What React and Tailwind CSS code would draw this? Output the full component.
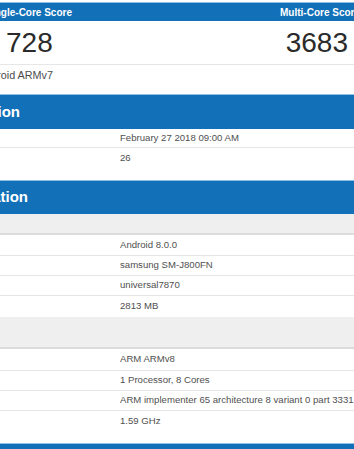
import React from "react"

const BLUE = "bg-[#1170b8]"

function Bar({ title, endX, height }) {
  // section header; the title runs off the left edge of the window
  return (
    <div className={`${BLUE} border-t border-[#8cc0e4] flex items-center ${height}`}>
      <div className="flex justify-end whitespace-nowrap text-white font-bold text-[15px]" style={{ width: endX }}>
        {title}
      </div>
    </div>
  )
}

function Row({ value, h = "h-[19px]", last = false }) {
  return (
    <div className={`${h} flex items-center pl-[120px] text-[9.6px] text-[#505050] whitespace-nowrap ${last ? "" : "border-b border-[#e6e6e6]"}`}>
      {value}
    </div>
  )
}

export default function App() {
  return (
    <div className="w-[354px] h-[449px] overflow-hidden bg-white font-['Liberation_Sans',Arial,sans-serif]">
      {/* scores */}
      <div className="pt-[2px]">
        <div className={`${BLUE} border-t border-[#8cc0e4] h-[19px] flex items-center text-white font-bold text-[10px] whitespace-nowrap`}>
          <div className="w-[72px] flex justify-end">Single-Core Score</div>
          <div className="ml-[208px]">Multi-Core Score</div>
        </div>
        <div className="h-[44px] border-b border-[#e6e6e6] flex items-center justify-between pl-[6px] pr-[6px] text-[28px] text-[#2a2a2a] leading-none">
          <span>728</span>
          <span>3683</span>
        </div>
        <div className="h-[20px] flex items-center text-[10.8px] text-[#4d4d4d] whitespace-nowrap">
          <div className="w-[53px] flex justify-end">Geekbench 4.2.0 Tryout for Android ARMv7</div>
        </div>
      </div>

      {/* result information */}
      <div className="mt-[9px]">
        <Bar title="Result Information" endX={20} height="h-[35px]" />
        <Row value="February 27 2018 09:00 AM" h="h-[19px]" />
        <Row value="26" h="h-[20px]" last />
      </div>

      {/* system information */}
      <div className="mt-[12px]">
        <Bar title="System Information" endX={28} height="h-[34px]" />
        <div className="h-[21px] bg-[#efefef] border-b-2 border-[#dcdcdc]" />
        <Row value="Android 8.0.0" h="h-[21px]" />
        <Row value="samsung SM-J800FN" h="h-[20px]" />
        <Row value="universal7870" h="h-[20px]" />
        <Row value="2813 MB" h="h-[20px]" last />
        <div className="mt-[1px] h-[32px] bg-[#efefef] border-b-2 border-[#dcdcdc]" />
        <Row value="ARM ARMv8" h="h-[22px]" />
        <Row value="1 Processor, 8 Cores" h="h-[20px]" />
        <Row value="ARM implementer 65 architecture 8 variant 0 part 3331" h="h-[20px]" />
        <Row value="1.59 GHz" h="h-[20px]" last />
      </div>

      <div className="mt-[12px]">
        <div className={`${BLUE} border-t border-[#8cc0e4] h-[34px]`} />
      </div>
    </div>
  )
}
